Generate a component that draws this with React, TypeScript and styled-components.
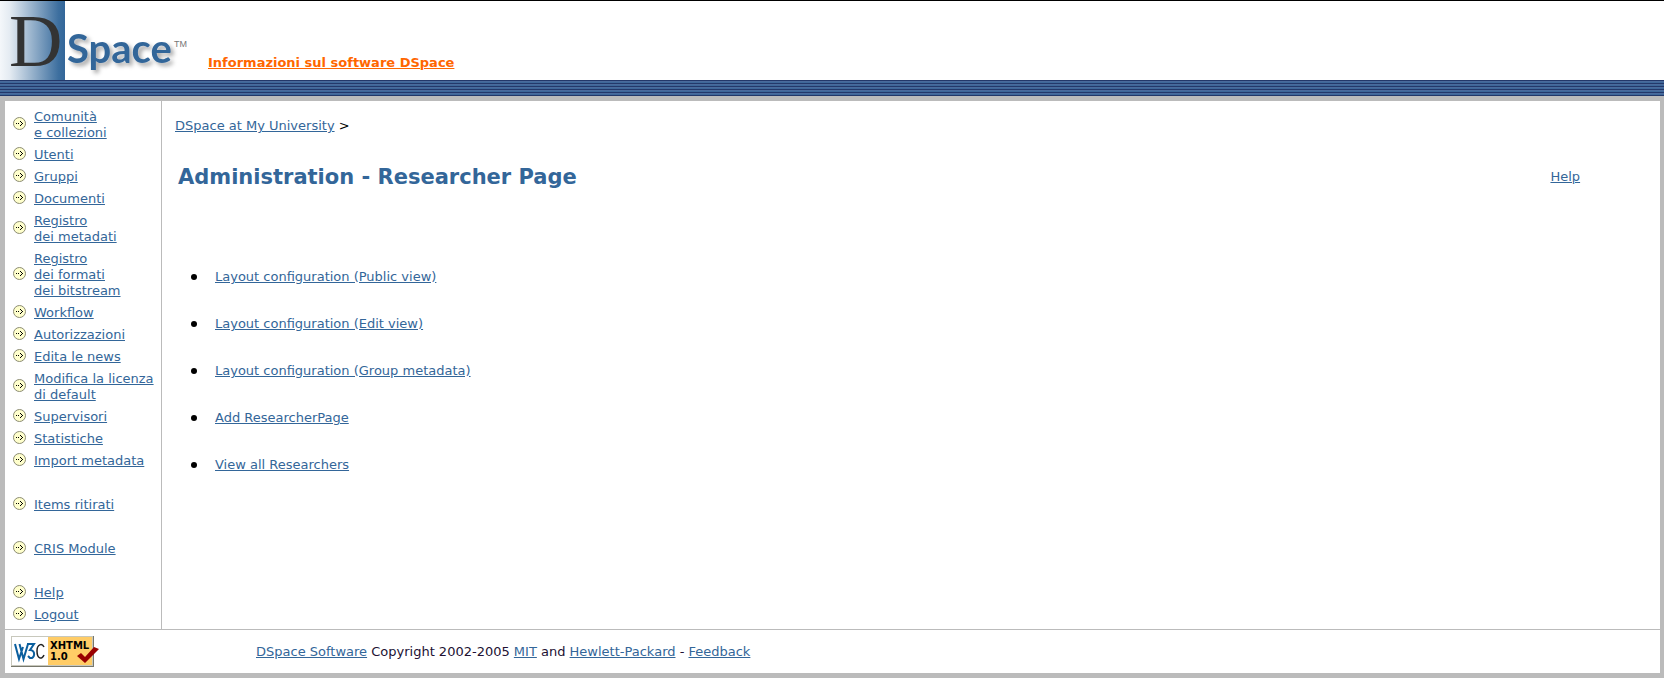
import React from 'react';
import styled, { createGlobalStyle } from 'styled-components';

const GlobalStyle = createGlobalStyle`
  * { box-sizing: border-box; }
  html, body, #root { height: 100%; }
  body {
    margin: 0;
    background: #ffffff;
    color: #000000;
    font: 13px/16px Verdana, "DejaVu Sans", sans-serif;
  }
`;

const Page = styled.div`
  display: flex;
  flex-direction: column;
  min-height: 100%;
`;

const Banner = styled.header`
  display: flex;
  align-items: flex-end;
  border-top: 1px solid #000000;
`;

const LogoLink = styled.a`
  display: block;
  line-height: 0;
`;

const LogoImage = styled.svg`
  overflow: visible;
`;

const Link = styled.a`
  color: #336699;
  text-decoration: underline;
`;

const AboutLink = styled(Link)`
  margin: 0 0 9px 10px;
  color: #ff6600;
  font-weight: bold;
`;

const Stripes = styled.div`
  height: 16px;
  border-bottom: 1px solid #23386a;
  background: repeating-linear-gradient(to bottom, #23386a 0 1px, #4a6a9c 1px 2px, #3d6799 2px 3px);
`;

const Frame = styled.div`
  display: flex;
  flex: 1;
  flex-direction: column;
  border: solid #bbbbbb;
  border-width: 5px 4px 5px 5px;
`;

const Columns = styled.div`
  display: flex;
  flex: 1;
`;

const Sidebar = styled.nav`
  flex: 0 0 157px;
  padding: 5px 0 3px 8px;
  border-right: 1px solid #bbbbbb;
`;

const MenuGroup = styled.ul`
  margin: 0;
  padding: 0;
  list-style: none;

  & + & {
    margin-top: 22px;
  }
`;

const MenuItem = styled.li`
  display: flex;
  align-items: center;
  gap: 8px;
  padding: 3px 0;
  white-space: pre-line;
`;

const ArrowIcon = styled.svg`
  flex: none;
  width: 13px;
  height: 13px;
  margin-bottom: 3px;
`;

const Main = styled.main`
  flex: 1;
  padding: 17px 12px 17px 13px;
`;

const TitleRow = styled.div`
  display: flex;
  align-items: center;
  justify-content: space-between;
  margin-top: 29px;
  padding: 0 4% 0 3px;
`;

const Title = styled.h1`
  margin: 0;
  color: #336699;
  font-size: 21px;
  line-height: 28px;
`;

const HelpLink = styled(Link)`
  margin-right: 9px;
`;

const TaskList = styled.ul`
  display: flex;
  flex-direction: column;
  gap: 31px;
  margin: 78px 0 0;
  padding: 0 0 0 16px;
  list-style: none;
`;

const TaskItem = styled.li`
  display: flex;
  align-items: center;
  gap: 18px;

  &::before {
    content: "";
    width: 6px;
    height: 6px;
    border-radius: 50%;
    background: #000000;
  }
`;

const Footer = styled.footer`
  display: flex;
  align-items: center;
  gap: 157px;
  padding: 6px;
  border-top: 1px solid #bbbbbb;
`;

const BadgeLink = styled.a`
  display: block;
  line-height: 0;
`;

const Copyright = styled.p`
  margin: 0;
  color: #221133;
  line-height: 17px;
`;

const Logo = () => (
  <LogoImage width="198" height="79" viewBox="0 0 198 79" role="img" aria-label="DSpace">
    <defs>
      <linearGradient id="tile">
        <stop offset="0" stopColor="#f4f7fa" />
        <stop offset="0.15" stopColor="#e4ebf2" />
        <stop offset="0.9" stopColor="#3d6f9f" />
        <stop offset="1" stopColor="#336699" />
      </linearGradient>
      <filter id="shadow" x="-10%" y="-10%" width="130%" height="140%">
        <feDropShadow dx="3" dy="3" stdDeviation="2" floodColor="#000000" floodOpacity="0.35" />
      </filter>
    </defs>
    <rect width="65" height="79" fill="url(#tile)" />
    <text x="9" y="65" fontFamily="Liberation Serif, serif" fontSize="74" fill="#333333">D</text>
    <text x="67" y="62" fontFamily="Lato, sans-serif" fontSize="40" fontWeight="700" fill="#336699" filter="url(#shadow)">Space</text>
    <text x="174" y="46" fontFamily="Liberation Sans, sans-serif" fontSize="9" fill="#777777">TM</text>
  </LogoImage>
);

const Arrow = () => (
  <ArrowIcon viewBox="0 0 13 13" aria-hidden="true">
    <circle cx="6.5" cy="6.5" r="6" fill="#ffffcc" stroke="#8c8c73" />
    <path
      d="M3 6h1v1H3zM5 6h1v1H5zM9 6h1v1H9zM8 5h1v1H8zM8 7h1v1H8zM7 4h1v1H7zM7 8h1v1H7z"
      fill="#000000"
      shapeRendering="crispEdges"
    />
  </ArrowIcon>
);

const XhtmlBadge = () => (
  <svg width="88" height="31" viewBox="0 0 88 31" role="img" aria-label="Valid XHTML 1.0">
    <rect width="83" height="31" fill="#77776b" />
    <rect width="82" height="30" fill="#c8c8bc" />
    <rect x="1" y="1" width="36" height="28" fill="#ffffff" />
    <rect x="37" y="1" width="44" height="28" fill="#ffcc66" />
    <path d="M4 8l4 15 4-12M8.500 8l4 15 4.500-15" fill="none" stroke="#0b5f9e" strokeWidth="2" />
    <path d="M16 8h7l-4 6c6 0 5 9 0 8l-2-2" fill="none" stroke="#0b5f9e" strokeWidth="2" />
    <path d="M33 11c-2-4-7-3-7 4 0 8 5 9 7 4" fill="none" stroke="#222222" strokeWidth="1.500" />
    <text x="39" y="13" fontFamily="DejaVu Sans, sans-serif" fontSize="10" fontWeight="700">XHTML</text>
    <text x="39" y="24" fontFamily="DejaVu Sans, sans-serif" fontSize="10" fontWeight="700">1.0</text>
    <path d="M66 20l4-3 4 4 9-10 5 2-14 14z" fill="#990000" />
  </svg>
);

const menu: string[][] = [
  [
    'Comunità\ne collezioni',
    'Utenti',
    'Gruppi',
    'Documenti',
    'Registro\ndei metadati',
    'Registro\ndei formati\ndei bitstream',
    'Workflow',
    'Autorizzazioni',
    'Edita le news',
    'Modifica la licenza\ndi default',
    'Supervisori',
    'Statistiche',
    'Import metadata',
  ],
  ['Items ritirati'],
  ['CRIS Module'],
  ['Help', 'Logout'],
];

const tasks: string[] = [
  'Layout configuration (Public view)',
  'Layout configuration (Edit view)',
  'Layout configuration (Group metadata)',
  'Add ResearcherPage',
  'View all Researchers',
];

export default function App() {
  return (
    <Page>
      <GlobalStyle />
      <Banner>
        <LogoLink href="#"><Logo /></LogoLink>
        <AboutLink href="#">Informazioni sul software DSpace</AboutLink>
      </Banner>
      <Stripes />
      <Frame>
        <Columns>
          <Sidebar>
            {menu.map((group) => (
              <MenuGroup key={group[0]}>
                {group.map((label) => (
                  <MenuItem key={label}>
                    <Arrow />
                    <Link href="#">{label}</Link>
                  </MenuItem>
                ))}
              </MenuGroup>
            ))}
          </Sidebar>
          <Main>
            <div><Link href="#">DSpace at My University</Link> &gt;</div>
            <TitleRow>
              <Title>Administration - Researcher Page</Title>
              <HelpLink href="#">Help</HelpLink>
            </TitleRow>
            <TaskList>
              {tasks.map((task) => (
                <TaskItem key={task}><Link href="#">{task}</Link></TaskItem>
              ))}
            </TaskList>
          </Main>
        </Columns>
        <Footer>
          <BadgeLink href="#"><XhtmlBadge /></BadgeLink>
          <Copyright>
            <Link href="#">DSpace Software</Link> Copyright 2002-2005 <Link href="#">MIT</Link> and{' '}
            <Link href="#">Hewlett-Packard</Link> - <Link href="#">Feedback</Link>
          </Copyright>
        </Footer>
      </Frame>
    </Page>
  );
}
